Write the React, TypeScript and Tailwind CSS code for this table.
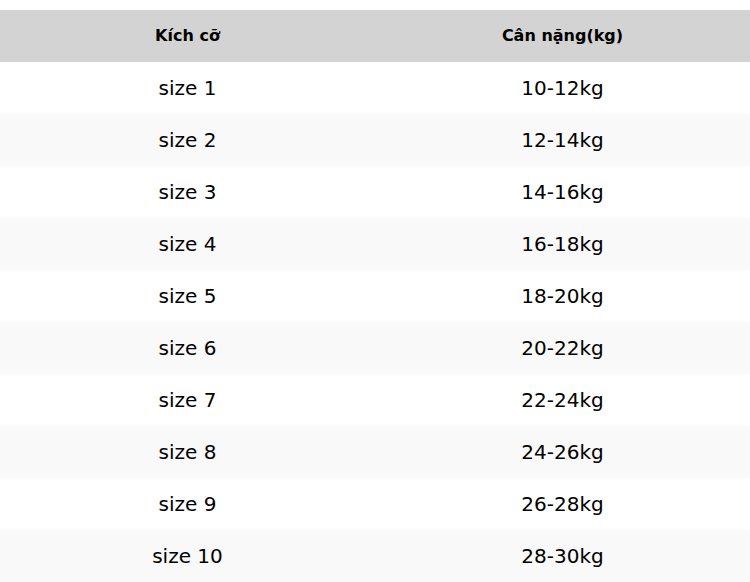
const rows = [
  ["size 1", "10-12kg"],
  ["size 2", "12-14kg"],
  ["size 3", "14-16kg"],
  ["size 4", "16-18kg"],
  ["size 5", "18-20kg"],
  ["size 6", "20-22kg"],
  ["size 7", "22-24kg"],
  ["size 8", "24-26kg"],
  ["size 9", "26-28kg"],
  ["size 10", "28-30kg"],
];

export default function App() {
  return (
    <div className="w-[750px] pt-[10px] bg-white text-black font-['DejaVu_Sans',sans-serif]">
      <table className="w-full border-collapse table-fixed">
        <thead>
          <tr className="bg-[#d3d3d3] h-[52px]">
            <th className="text-[16px] font-bold">Kích cỡ</th>
            <th className="text-[16px] font-bold">Cân nặng(kg)</th>
          </tr>
        </thead>
        <tbody>
          {rows.map(([size, weight], i) => (
            <tr key={size} className={`h-[52px] ${i % 2 === 1 ? "bg-[#f9f9f9]" : "bg-white"}`}>
              <td className="text-center text-[20px]">{size}</td>
              <td className="text-center text-[20px]">{weight}</td>
            </tr>
          ))}
        </tbody>
      </table>
    </div>
  );
}
